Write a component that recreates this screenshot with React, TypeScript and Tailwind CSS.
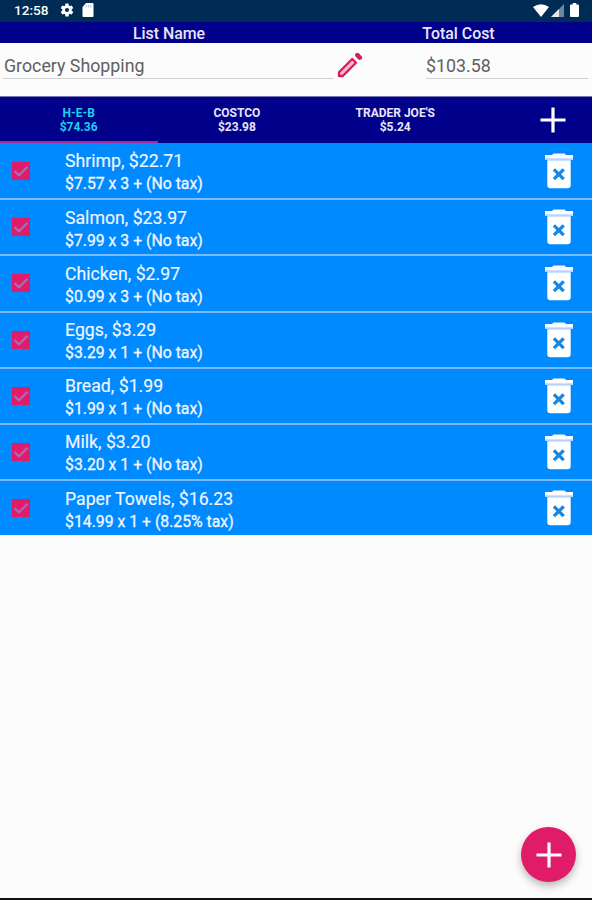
import { useState } from "react";

type Item = {
  name: string;
  total: string;
  detail: string;
};

const items: Item[] = [
  { name: "Shrimp", total: "$22.71", detail: "$7.57 x 3 + (No tax)" },
  { name: "Salmon", total: "$23.97", detail: "$7.99 x 3 + (No tax)" },
  { name: "Chicken", total: "$2.97", detail: "$0.99 x 3 + (No tax)" },
  { name: "Eggs", total: "$3.29", detail: "$3.29 x 1 + (No tax)" },
  { name: "Bread", total: "$1.99", detail: "$1.99 x 1 + (No tax)" },
  { name: "Milk", total: "$3.20", detail: "$3.20 x 1 + (No tax)" },
  { name: "Paper Towels", total: "$16.23", detail: "$14.99 x 1 + (8.25% tax)" },
];

const stores = [
  { name: "H-E-B", total: "$74.36" },
  { name: "COSTCO", total: "$23.98" },
  { name: "TRADER JOE'S", total: "$5.24" },
];

const PlusIcon = ({ className }: { className: string }) => (
  <svg viewBox="0 0 26 26" className={className} fill="currentColor">
    <path d="M11.4 0.5h3.2v10.9h10.9v3.2H14.6v10.9h-3.2V14.6H0.5v-3.2h10.9z" />
  </svg>
);

const TrashIcon = () => (
  <svg viewBox="0 0 28 36" className="h-9 w-7">
    <path d="M8.5 0.5h11L21 2h7v4.5H0V2h7z" fill="#fff" />
    <path d="M0 4.9h28v1.7H0z" fill="#d5deff" />
    <path d="M2.3 6.6h23.4v1.2H2.3z" fill="#b5d6ff" />
    <path d="M2.3 7.6h23.4V32a3.3 3.3 0 0 1-3.3 3.3H5.6A3.3 3.3 0 0 1 2.3 32z" fill="#fff" />
    <path d="M8.9 16.4l9.8 9.8M18.7 16.4l-9.8 9.8" stroke="#1687e6" strokeWidth="3.3" />
  </svg>
);

const StatusBar = () => (
  <div className="flex h-[22px] items-center bg-[#002b55] pl-[14px] pr-[13px] text-white">
    <span className="-mt-px w-[35px] text-[13.6px] font-medium leading-none">12:58</span>
    <svg viewBox="0 0 24 24" className="-mt-[2px] ml-[10px] h-4 w-4" fill="currentColor">
      <path
        fillRule="evenodd"
        d="M19.14 12.94c.04-.3.06-.61.06-.94s-.02-.64-.07-.94l2.03-1.58a.5.5 0 0 0 .12-.61l-1.92-3.32a.5.5 0 0 0-.59-.22l-2.39.96a7 7 0 0 0-1.62-.94l-.36-2.54A.48.48 0 0 0 13.92 2.4h-3.84a.48.48 0 0 0-.47.41l-.36 2.54a7 7 0 0 0-1.62.94l-2.39-.96a.48.48 0 0 0-.59.22L2.74 8.87a.48.48 0 0 0 .12.61l2.03 1.58a6.6 6.6 0 0 0 0 1.88l-2.03 1.58a.5.5 0 0 0-.12.61l1.92 3.32c.12.22.37.29.59.22l2.39-.96c.5.38 1.03.7 1.62.94l.36 2.54c.05.24.24.41.48.41h3.84c.24 0 .44-.17.47-.41l.36-2.54a7 7 0 0 0 1.62-.94l2.39.96c.22.08.47 0 .59-.22l1.92-3.32a.48.48 0 0 0-.12-.61zM12 15.1A3.1 3.1 0 1 1 12 8.9a3.1 3.1 0 0 1 0 6.2z"
      />
    </svg>
    <svg viewBox="0 0 12 14" className="-mt-[2px] ml-[7px] h-[14px] w-3" fill="currentColor">
      <path d="M4 0h6.5q1 0 1 1v12q0 1-1 1H1.5q-1 0-1-1V4z" />
      <path d="M4.3 2v2.5M6.5 2v2.5M8.7 2v2.5" stroke="#b4c1cf" />
    </svg>
    <div className="-mt-[2px] ml-auto flex items-center">
      <svg viewBox="0 0 16 13" className="h-[13px] w-4" fill="currentColor">
        <path d="M0 3Q8-2.5 16 3L8 13z" />
      </svg>
      <svg viewBox="0 0 13 13" className="ml-[2px] h-[13px] w-[13px]">
        <path d="M0 13L13 0v13z" fill="#6f86a0" />
        <path d="M0 13L8 5v8z" fill="#dfe6ec" />
      </svg>
      <svg viewBox="0 0 9 14" className="ml-[6px] h-[14px] w-[9px]" fill="currentColor">
        <path d="M2.7 0h3.6v1.4H8q1 0 1 1V13q0 1-1 1H1q-1 0-1-1V2.4q0-1 1-1h1.7z" />
      </svg>
    </div>
  </div>
);

type ItemRowProps = {
  item: Item;
  checked: boolean;
  onToggle: () => void;
};

const ItemRow = ({ item, checked, onToggle }: ItemRowProps) => (
  <li className="flex h-[56.2px] items-start border-b-2 border-[#78bcff] pl-3 pr-[19px] last:h-[54px] last:border-b-0">
    <button type="button" onClick={onToggle} className="mt-[18px] h-[18px] w-[18px] bg-[#e01b6a]">
      {checked && (
        <svg viewBox="0 0 18 18" className="h-[18px] w-[18px]" fill="none">
          <path d="M2.5 9l4.4 4.4L15.5 4.8" stroke="#a76bb5" strokeWidth="2.2" />
        </svg>
      )}
    </button>
    <div className="ml-[35px] flex-1 whitespace-nowrap pt-[6.4px] text-[#f1f6ff]">
      <p className="text-[17.7px] leading-[23px] [-webkit-text-stroke:0.15px]">
        {item.name}, {item.total}
      </p>
      <p className="text-[15.8px] leading-[22px] [-webkit-text-stroke:0.3px]">{item.detail}</p>
    </div>
    <button type="button" className="mt-[9px]">
      <TrashIcon />
    </button>
  </li>
);

const App = () => {
  const [activeStore, setActiveStore] = useState(0);
  const [checked, setChecked] = useState(items.map(() => true));

  const toggle = (index: number) => {
    setChecked((prev) => prev.map((value, i) => (i === index ? !value : value)));
  };

  return (
    <div className="relative flex h-[900px] w-[592px] flex-col overflow-hidden border-b-2 border-[#111] bg-[#fcfcfc] font-[Roboto,sans-serif]">
      <StatusBar />
      <div className="flex h-[21px] bg-[#00008b] text-[15.9px] font-medium leading-[23px] text-[#e6e6fa]">
        <p className="w-[338px] text-center">List Name</p>
        <p className="w-[241px] text-center">Total Cost</p>
      </div>

      <div className="flex h-[53px] items-start pl-[3px] pr-1 text-[17.8px] text-[#606060]">
        <p className="h-9 w-[331px] border-b border-[#cfcfcf] pl-px leading-[46px]">Grocery Shopping</p>
        <svg viewBox="0 0 26 26" className="ml-[3px] mt-[9px] h-[26px] w-[26px]" fill="none" stroke="#d81b60" strokeLinejoin="round">
          <path d="M2 20.2L15.2 7l3.8 3.8L5.8 24H2z" fill="#f8b8cd" strokeWidth="2.3" />
          <path d="M20.4 3.2l2.4 2.4" strokeWidth="4.6" strokeLinecap="round" />
        </svg>
        <p className="ml-[63px] h-9 w-[162px] border-b border-[#cfcfcf] leading-[46px]">$103.58</p>
      </div>

      <div className="flex h-[47px] border-t border-[#7777b4] bg-[#00008b]">
        {stores.map((store, index) => (
          <button
            key={store.name}
            type="button"
            onClick={() => setActiveStore(index)}
            className={`w-[158.3px] border-b-2 pr-px pt-[3px] text-[12px] font-bold leading-[13.5px] ${
              index === activeStore ? "border-[#a8288f] text-[#18d2ee]" : "border-transparent text-[#e6e6fa]"
            }`}
          >
            {store.name}
            <br />
            {store.total}
          </button>
        ))}
        <button type="button" className="-mt-px ml-[65px] text-white">
          <PlusIcon className="h-[26px] w-[26px]" />
        </button>
      </div>

      <ul className="bg-[#008aff] pt-px">
        {items.map((item, index) => (
          <ItemRow key={item.name} item={item} checked={checked[index]} onToggle={() => toggle(index)} />
        ))}
      </ul>

      <button
        type="button"
        className="absolute bottom-4 right-4 flex h-[55px] w-[55px] items-center justify-center rounded-full bg-[#e01b6a] text-white shadow-[0_4px_8px_rgba(0,0,0,0.28)]"
      >
        <PlusIcon className="h-[26px] w-[26px]" />
      </button>
    </div>
  );
};

export default App;
